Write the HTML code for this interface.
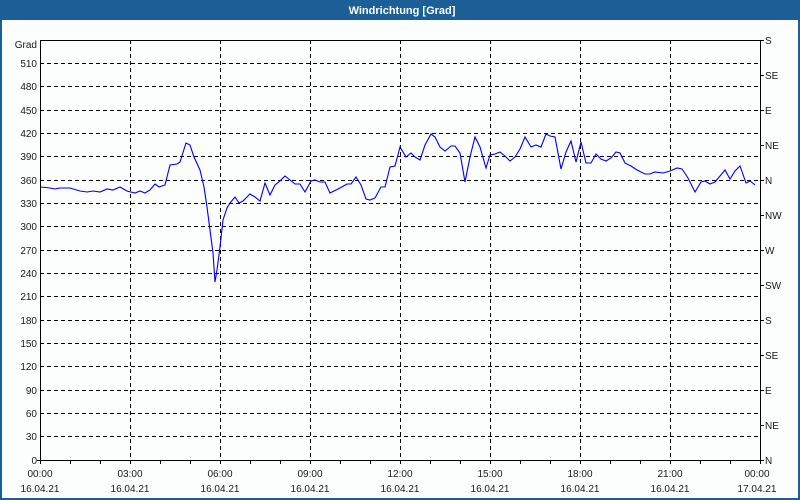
<!DOCTYPE html>
<html><head><meta charset="utf-8"><style>
html,body{margin:0;padding:0;background:#fcfdfd;width:800px;height:500px;overflow:hidden}
svg{display:block}
text{font-family:"Liberation Sans",sans-serif;font-size:10px;fill:#1a1a1a}
</style></head><body>
<svg width="800" height="500" viewBox="0 0 800 500" xmlns="http://www.w3.org/2000/svg">
<rect x="0" y="0" width="800" height="500" fill="#fcfdfd"/>
<rect x="0" y="0" width="800" height="20" fill="#1c5f97"/>
<rect x="0" y="0" width="2" height="500" fill="#1c5f97"/>
<rect x="798" y="0" width="2" height="500" fill="#1c5f97"/>
<rect x="0" y="498" width="800" height="2" fill="#1c5f97"/>
<text x="402" y="14" text-anchor="middle" style="fill:#fff;font-weight:bold;font-size:11px">Windrichtung [Grad]</text>
<g stroke="#000" stroke-width="1" stroke-dasharray="4,3" fill="none" shape-rendering="crispEdges">
<path d="M40 63.5H760M40 86.5H760M40 110.5H760M40 133.5H760M40 156.5H760M40 180.5H760M40 203.5H760M40 226.5H760M40 250.5H760M40 273.5H760M40 296.5H760M40 320.5H760M40 343.5H760M40 366.5H760M40 390.5H760M40 413.5H760M40 436.5H760"/>
<path d="M130.5 40V460M220.5 40V460M310.5 40V460M400.5 40V460M490.5 40V460M580.5 40V460M670.5 40V460"/>
</g>
<g stroke="#000" stroke-width="1" fill="none" shape-rendering="crispEdges">
<path d="M40.5 40V460.5H760.5V40M40 40.5H760"/>
<path d="M37 460.5H40M760 40.5H764M760 75.5H764M760 110.5H764M760 145.5H764M760 180.5H764M760 215.5H764M760 250.5H764M760 285.5H764M760 320.5H764M760 355.5H764M760 390.5H764M760 425.5H764M760 460.5H764"/>
<path d="M40.5 460V464M70.5 460V464M100.5 460V464M130.5 460V464M160.5 460V464M190.5 460V464M220.5 460V464M250.5 460V464M280.5 460V464M310.5 460V464M340.5 460V464M370.5 460V464M400.5 460V464M430.5 460V464M460.5 460V464M490.5 460V464M520.5 460V464M550.5 460V464M580.5 460V464M610.5 460V464M640.5 460V464M670.5 460V464M700.5 460V464M730.5 460V464M760.5 460V464"/>
</g>
<g text-anchor="end">
<text x="37" y="48">Grad</text>
<text x="37" y="67">510</text><text x="37" y="90">480</text><text x="37" y="114">450</text><text x="37" y="137">420</text><text x="37" y="160">390</text><text x="37" y="184">360</text><text x="37" y="207">330</text><text x="37" y="230">300</text><text x="37" y="254">270</text><text x="37" y="277">240</text><text x="37" y="300">210</text><text x="37" y="324">180</text><text x="37" y="347">150</text><text x="37" y="370">120</text><text x="37" y="394">90</text><text x="37" y="417">60</text><text x="37" y="440">30</text><text x="37" y="464">0</text>
</g>
<g>
<text x="765" y="44">S</text><text x="765" y="79">SE</text><text x="765" y="114">E</text><text x="765" y="149">NE</text><text x="765" y="184">N</text><text x="765" y="219">NW</text><text x="765" y="254">W</text><text x="765" y="289">SW</text><text x="765" y="324">S</text><text x="765" y="359">SE</text><text x="765" y="394">E</text><text x="765" y="429">NE</text><text x="765" y="464">N</text>
</g>
<g text-anchor="middle">
<text x="40" y="477">00:00</text><text x="130" y="477">03:00</text><text x="220" y="477">06:00</text><text x="310" y="477">09:00</text><text x="400" y="477">12:00</text><text x="490" y="477">15:00</text><text x="580" y="477">18:00</text><text x="670" y="477">21:00</text><text x="757" y="477">00:00</text>
<text x="40" y="492">16.04.21</text><text x="130" y="492">16.04.21</text><text x="220" y="492">16.04.21</text><text x="310" y="492">16.04.21</text><text x="400" y="492">16.04.21</text><text x="490" y="492">16.04.21</text><text x="580" y="492">16.04.21</text><text x="670" y="492">16.04.21</text><text x="757" y="492">17.04.21</text>
</g>
<polyline fill="none" stroke="#0000ee" stroke-width="1.1" points="41,187 50,188 55,189 60,188 70,188 80,191 87,192 93,191 100,192 107,189 113,190 120,187 127,191 135,193 140,191 145,193 150,190 155,184 159,187 165,185 170,165 177,164 180,162 186,143 190,145 194,157 200,170 204,187 207,207 210,230 213,253 215,282 217,270 220,247 223,220 227,208 230,203 235,197 239,203 243,201 250,194 255,197 260,201 265,183 270,195 275,185 280,181 285,176 290,180 295,184 300,184 305,192 311,181 315,180 320,182 325,182 330,193 340,188 347,184 351,184 356,177 361,185 366,199 370,200 375,198 381,187 385,187 390,167 395,166 400,147 406,157 411,153 415,157 420,160 425,145 431,134 435,137 440,147 445,151 451,146 455,146 460,153 465,182 470,157 475,137 480,147 486,168 490,155 495,154 500,152 505,156 510,161 515,157 520,149 525,137 531,147 536,145 541,147 546,134 550,136 555,137 561,169 566,152 571,141 576,162 581,142 586,163 591,163 596,154 601,159 606,161 611,158 616,152 620,153 625,163 631,166 637,170 645,174 650,174 655,172 663,173 670,171 677,168 682,169 688,178 695,192 701,182 705,181 710,184 715,182 720,176 725,170 730,179 735,171 740,166 746,183 750,181 755,185"/>
</svg>
</body></html>
